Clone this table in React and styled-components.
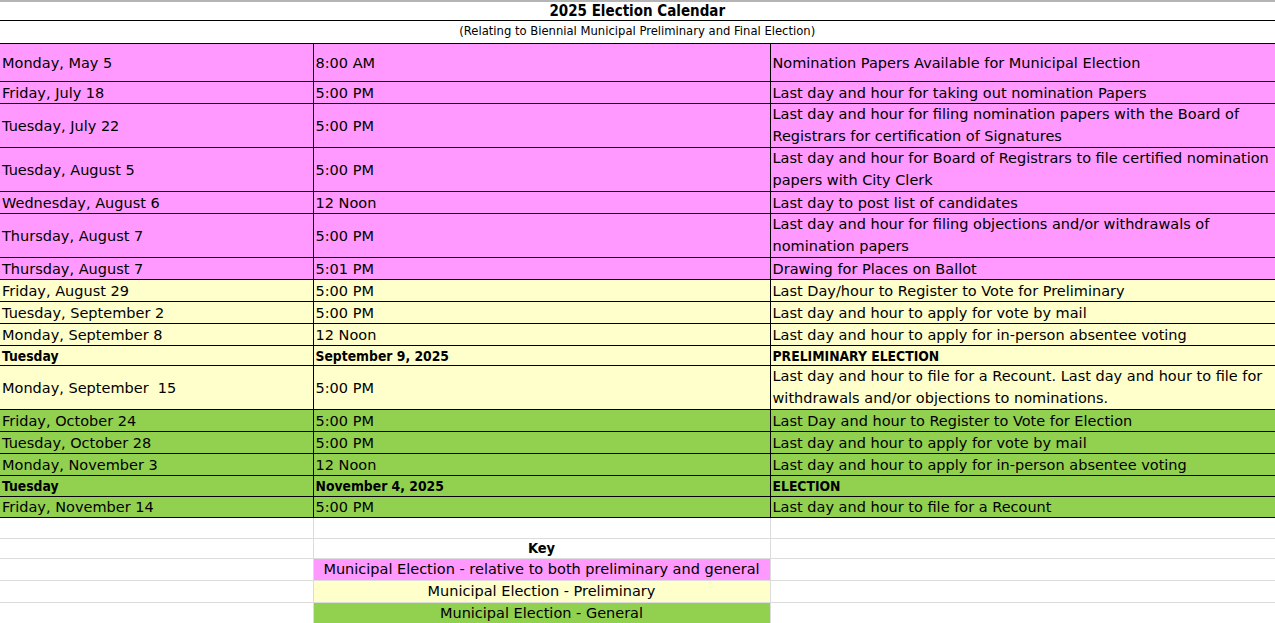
import React from 'react';
import styled, { createGlobalStyle } from 'styled-components';

const GlobalStyle = createGlobalStyle`
  html, body {
    margin: 0;
    padding: 0;
    background: #fff;
  }
  body {
    font-family: "DejaVu Sans", "Liberation Sans", sans-serif;
    color: #000;
  }
`;

// fill colours of the three election phases
const fills = {
  both: '#ff99ff',
  prelim: '#ffffcc',
  general: '#92d050',
};

const boldFont = '"DejaVu Sans Condensed", "DejaVu Sans", sans-serif';

const rows = [
  { tone: 'both', h: 38, day: 'Monday, May 5', time: '8:00 AM', what: ['Nomination Papers Available for Municipal Election'] },
  { tone: 'both', h: 22, day: 'Friday, July 18', time: '5:00 PM', what: ['Last day and hour for taking out nomination Papers'] },
  { tone: 'both', h: 44, day: 'Tuesday, July 22', time: '5:00 PM', what: ['Last day and hour for filing nomination papers with the Board of', 'Registrars for certification of Signatures'] },
  { tone: 'both', h: 44, day: 'Tuesday, August 5', time: '5:00 PM', what: ['Last day and hour for Board of Registrars to file certified nomination', 'papers with City Clerk'] },
  { tone: 'both', h: 22, day: 'Wednesday, August 6', time: '12 Noon', what: ['Last day to post list of candidates'] },
  { tone: 'both', h: 44, day: 'Thursday, August 7', time: '5:00 PM', what: ['Last day and hour for filing objections and/or withdrawals of', 'nomination papers'] },
  { tone: 'both', h: 22, day: 'Thursday, August 7', time: '5:01 PM', what: ['Drawing for Places on Ballot'] },
  { tone: 'prelim', h: 22, day: 'Friday, August 29', time: '5:00 PM', what: ['Last Day/hour to Register to Vote for Preliminary'] },
  { tone: 'prelim', h: 22, day: 'Tuesday, September 2', time: '5:00 PM', what: ['Last day and hour to apply for vote by mail'] },
  { tone: 'prelim', h: 22, day: 'Monday, September 8', time: '12 Noon', what: ['Last day and hour to apply for in-person absentee voting'] },
  { tone: 'prelim', h: 20, bold: true, day: 'Tuesday', time: 'September 9, 2025', what: ['PRELIMINARY ELECTION'] },
  { tone: 'prelim', h: 44, day: 'Monday, September\u00a0 15', time: '5:00 PM', what: ['Last day and hour to file for a Recount. Last day and hour to file for', 'withdrawals and/or objections to nominations.'] },
  { tone: 'general', h: 22, day: 'Friday, October 24', time: '5:00 PM', what: ['Last Day and hour to Register to Vote for Election'] },
  { tone: 'general', h: 22, day: 'Tuesday, October 28', time: '5:00 PM', what: ['Last day and hour to apply for vote by mail'] },
  { tone: 'general', h: 22, day: 'Monday, November 3', time: '12 Noon', what: ['Last day and hour to apply for in-person absentee voting'] },
  { tone: 'general', h: 21, bold: true, day: 'Tuesday', time: 'November 4, 2025', what: ['ELECTION'] },
  { tone: 'general', h: 21, day: 'Friday, November 14', time: '5:00 PM', what: ['Last day and hour to file for a Recount'] },
];

const keys = [
  { tone: 'both', label: 'Municipal Election - relative to both preliminary and general' },
  { tone: 'prelim', label: 'Municipal Election - Preliminary' },
  { tone: 'general', label: 'Municipal Election - General' },
];

const Sheet = styled.div`
  width: 1275px;
`;

const Grid = styled.table`
  width: 1275px;
  table-layout: fixed;
  border-collapse: collapse;
  border-spacing: 0;
`;

const TitleCell = styled.td`
  height: ${p => p.$h}px;
  padding: 0;
  text-align: center;
  vertical-align: middle;
  border-right: 1px solid #000;
  border-bottom: 1px solid #000;
  border-top: ${p => (p.$top ? '2px solid #b4b4b4' : 'none')};
  font-family: ${p => (p.$small ? 'inherit' : boldFont)};
  font-size: ${p => (p.$small ? '11.6px' : '15px')};
  font-weight: ${p => (p.$small ? 400 : 700)};
  line-height: 1;
`;

const Row = styled.tr`
  height: ${p => p.$h}px;
  background: ${p => fills[p.$tone]};
`;

const Cell = styled.td`
  padding: 0 0 0 2px;
  border: 1px solid #000;
  border-left: ${p => (p.$first ? 'none' : '1px solid #000')};
  vertical-align: middle;
  font-family: ${p => (p.$bold ? boldFont : 'inherit')};
  font-size: ${p => (p.$bold ? '13.8px' : '14.5px')};
  line-height: 18px;
  font-weight: ${p => (p.$bold ? 700 : 400)};
  white-space: nowrap;
  overflow: hidden;
`;

const Line = styled.div`
  height: 21.5px;
  line-height: 21.5px;
`;

const KeyGrid = styled(Grid)``;

const KeyRow = styled.tr`
  height: ${p => p.$h}px;
`;

const KeyCell = styled.td`
  padding: 0;
  border: 1px solid #dcdcdc;
  border-top: none;
  border-left: ${p => (p.$first ? 'none' : '1px solid #dcdcdc')};
  background: ${p => (p.$tone ? fills[p.$tone] : 'transparent')};
  text-align: center;
  vertical-align: middle;
  font-family: ${p => (p.$head ? boldFont : 'inherit')};
  font-size: ${p => (p.$head ? '14.5px' : '14.5px')};
  line-height: 18px;
  font-weight: ${p => (p.$head ? 700 : 400)};
  white-space: nowrap;
`;

const Cols = () => (
  <colgroup>
    <col style={{ width: 313 }} />
    <col style={{ width: 457 }} />
    <col style={{ width: 505 }} />
  </colgroup>
);

const App = () => {
  return (
    <Sheet>
      <GlobalStyle />
      <Grid>
        <Cols />
        <tbody>
          <tr>
            <TitleCell colSpan={3} $h={18} $top>2025 Election Calendar</TitleCell>
          </tr>
          <tr>
            <TitleCell colSpan={3} $h={22} $small>(Relating to Biennial Municipal Preliminary and Final Election)</TitleCell>
          </tr>
          {rows.map((r, i) => (
            <Row key={i} $h={r.h} $tone={r.tone}>
              <Cell $first $bold={r.bold}>{r.day}</Cell>
              <Cell $bold={r.bold}>{r.time}</Cell>
              <Cell $bold={r.bold}>
                {r.what.length > 1 ? r.what.map((t, j) => <Line key={j}>{t}</Line>) : r.what[0]}
              </Cell>
            </Row>
          ))}
        </tbody>
      </Grid>
      <KeyGrid>
        <Cols />
        <tbody>
          <KeyRow $h={20}>
            <KeyCell $first />
            <KeyCell />
            <KeyCell />
          </KeyRow>
          <KeyRow $h={20}>
            <KeyCell $first />
            <KeyCell $head>Key</KeyCell>
            <KeyCell />
          </KeyRow>
          {keys.map(k => (
            <KeyRow key={k.tone} $h={22}>
              <KeyCell $first />
              <KeyCell $tone={k.tone}>{k.label}</KeyCell>
              <KeyCell />
            </KeyRow>
          ))}
        </tbody>
      </KeyGrid>
    </Sheet>
  );
};

export default App;
